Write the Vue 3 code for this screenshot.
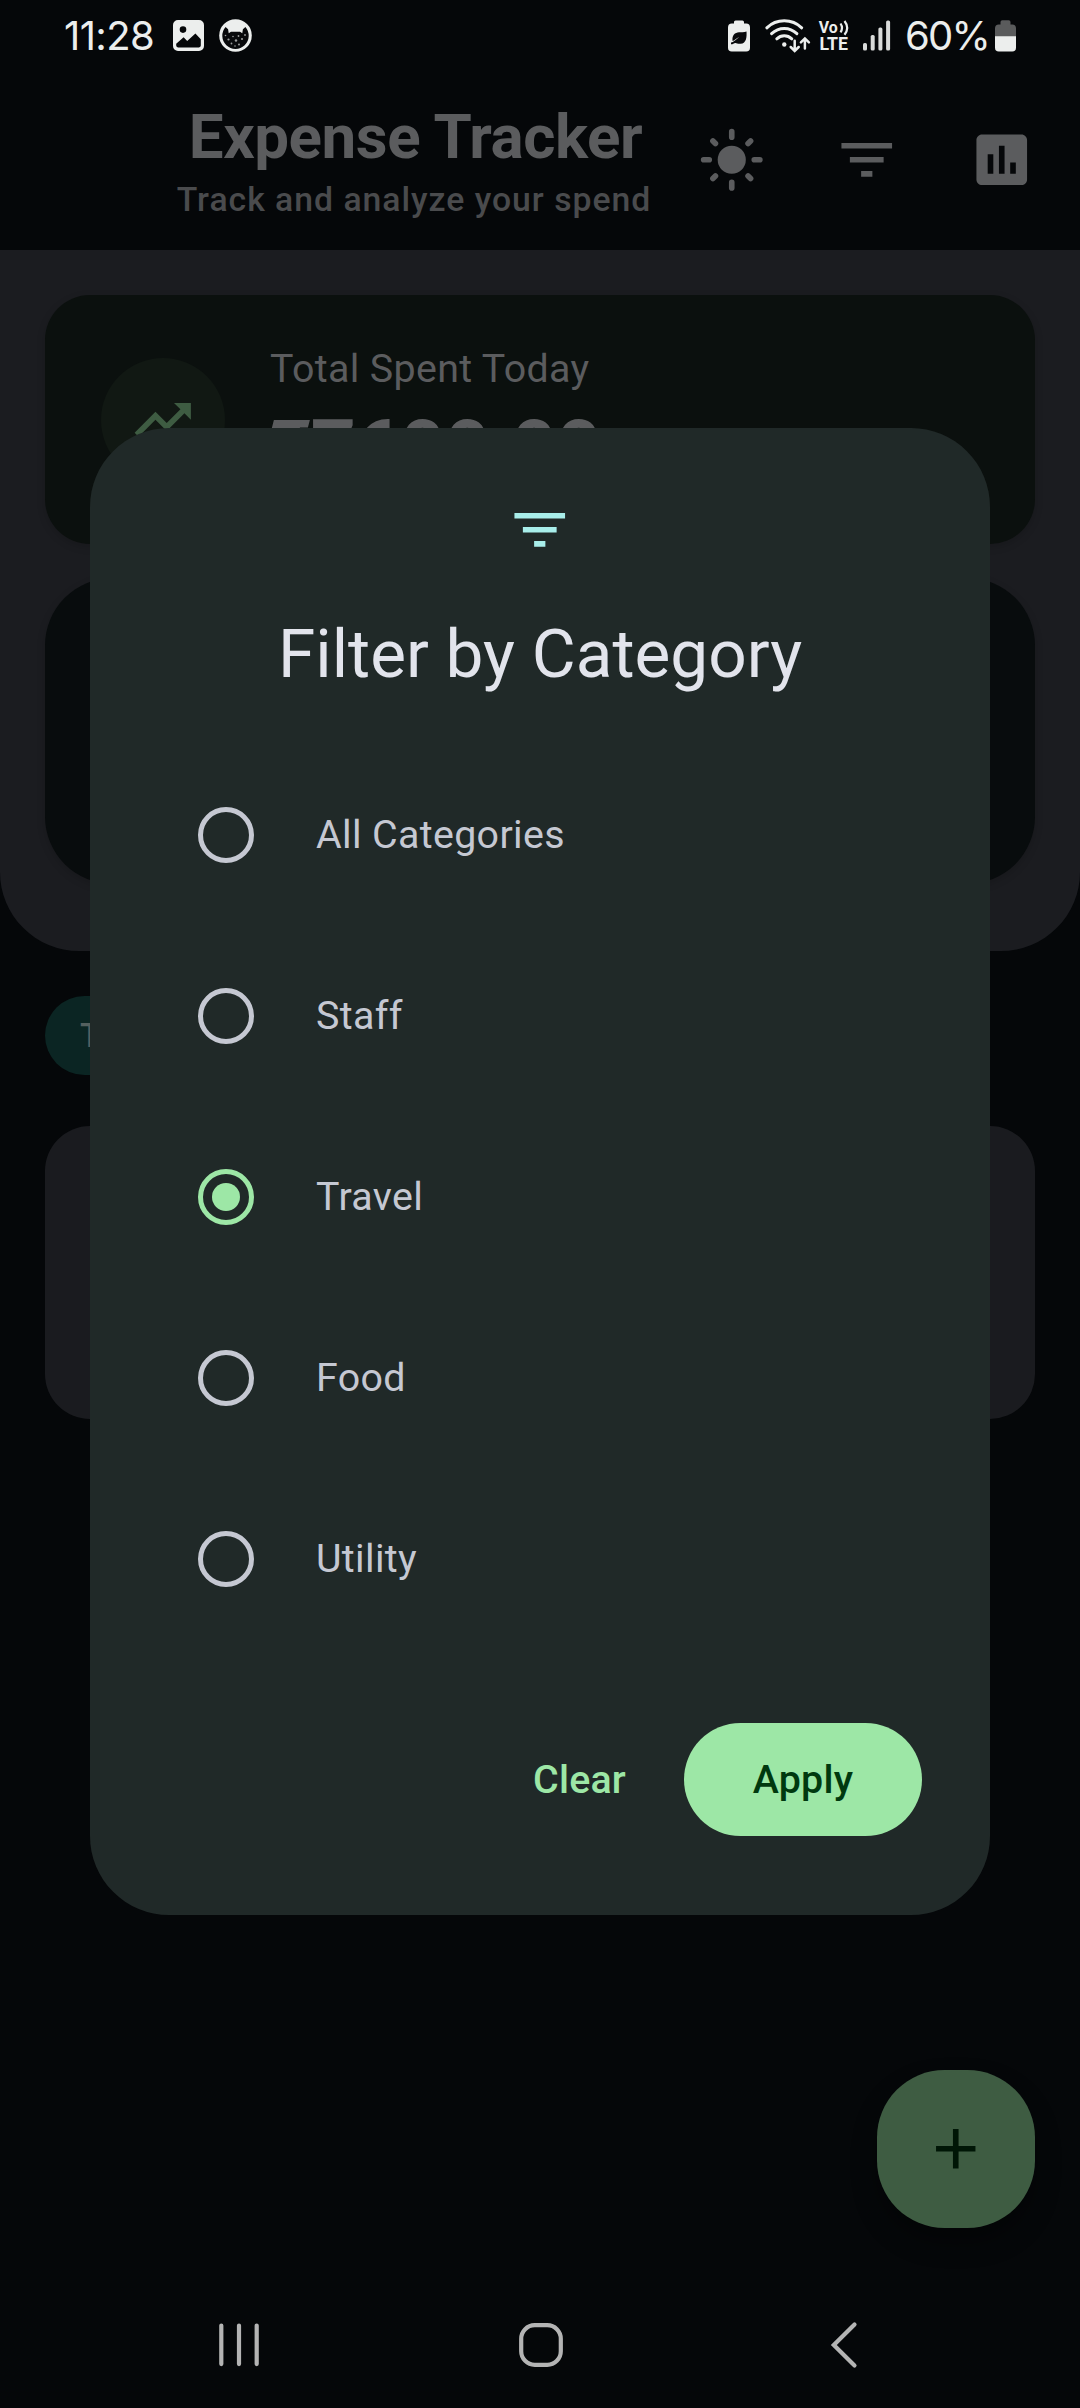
<script setup>
import { ref } from 'vue'

const categories = ['All Categories', 'Staff', 'Travel', 'Food', 'Utility']
const selected = ref('Travel')
const filterPath = 'M10 18h4v-2h-4v2zM3 6v2h18V6H3zm3 7h12v-2H6v2z'
</script>

<template>
  <div class="screen">
    <header class="status">
      <span class="clock">11:28</span>
      <svg class="s-photo" width="31" height="31" viewBox="0 0 31 31">
        <path fill="#eceeed" fill-rule="evenodd" d="M5 0h21a5 5 0 0 1 5 5v21a5 5 0 0 1-5 5H5a5 5 0 0 1-5-5V5a5 5 0 0 1 5-5zM10 6.300a3.300 3.300 0 1 0 0 6.600a3.300 3.300 0 1 0 0-6.600zM3.200 25.600q0 1.800 1.800 1.800h21q1.800 0 1.800-1.800v-6.400l-5.400-5.800-8.200 7.600-3.600-3.700-7.400 6.400z" />
      </svg>
      <svg class="s-cat" width="33" height="33" viewBox="0 0 33 33">
        <circle cx="16.500" cy="16.500" r="16.300" fill="#eceeed" />
        <path fill="#08090b" d="M6.600 8l2.500 2.200.6 4 2.300-1.500h9l2.300 1.500.6-4L26.400 8a13.200 13.200 0 1 1-19.800 0z" />
        <g fill="#9b9d9d"><circle cx="9.500" cy="20.500" r="1.100" /><circle cx="14" cy="17.500" r=".8" /><circle cx="19.500" cy="17" r=".9" /><circle cx="17" cy="21.500" r="1.200" /><circle cx="23" cy="20" r="1.100" /><circle cx="12.500" cy="24.500" r=".9" /><circle cx="20" cy="25.500" r="1" /><circle cx="16" cy="27" r=".8" /><circle cx="6.500" cy="16.500" r=".8" /><circle cx="26" cy="16" r=".9" /></g>
      </svg>
      <svg class="s-saver" width="22" height="32" viewBox="0 0 22 32">
        <path fill="#eceeed" d="M6 3.600V2a1.600 1.600 0 0 1 1.600-1.600h6.800A1.600 1.600 0 0 1 16 2v1.600h2.200A3.800 3.800 0 0 1 22 7.400v20.400a3.800 3.800 0 0 1-3.800 3.800H3.800A3.800 3.800 0 0 1 0 27.800V7.400a3.800 3.800 0 0 1 3.800-3.800z" />
        <path fill="#08090b" d="M18.500 11.500c.3 5 .2 12-6 12.300-3 .2-4-1-5.200-.8-1.500.2-2.500 1.400-4.300 1.300v-1.900c2 .2 5.500-3 8-5.400-3 1.500-5 4-6.400 3.900C3.800 15 7 12.500 11 12.200c3-.2 5.500.3 7.500-.7z" />
      </svg>
      <svg class="s-wifi" width="45" height="34" viewBox="0 0 45 34" fill="none" stroke="#eceeed" stroke-width="3" stroke-linecap="round">
        <path d="M1.800 8.800C11.500-.6 27-.6 36.700 8.800M6.600 14.700c7.300-7 18-7 25.300 0M11.800 19.800c4.300-4 10.600-4 15 0" />
        <circle cx="19.300" cy="25.500" r="2.200" fill="#eceeed" stroke="none" />
        <path d="M29.700 21.700v9.600M25.700 28l4 4 4-4M39.900 29.500v-9.800M35.900 23.400l4-4 4 4" stroke-width="2.500" />
      </svg>
      <svg class="volte" width="30" height="31" viewBox="0 0 30 31" font-family="Roboto, sans-serif" font-weight="700" fill="#eceeed">
        <text x="-.3" y="13" font-size="17" textLength="19" lengthAdjust="spacingAndGlyphs">Vo</text>
        <path d="M21.500 3.500q3 4.400 0 8.800M25.500 1q5.400 6.900 0 13.800" stroke="#eceeed" stroke-width="2.200" fill="none" />
        <text x=".5" y="30" font-size="18.500" textLength="28.500" lengthAdjust="spacingAndGlyphs">LTE</text>
      </svg>
      <svg class="s-signal" width="28" height="31" viewBox="0 0 28 31" fill="#d9dbda">
        <rect x="0" y="23" width="4" height="7.500" rx="1.600" />
        <rect x="7.700" y="15" width="4" height="15.500" rx="1.600" />
        <rect x="15.400" y="7.500" width="4" height="23" rx="1.600" />
        <rect x="23.100" y=".5" width="4" height="30" rx="1.600" />
      </svg>
      <span class="percent">60%</span>
      <svg class="s-batt" width="21" height="32" viewBox="0 0 21 32">
        <path fill="#5a5b5c" d="M5.500 4.500V2A1.800 1.800 0 0 1 7.300.2h6.400A1.800 1.800 0 0 1 15.500 2v2.500h1.700A3.800 3.800 0 0 1 21 8.300V17H0V8.300a3.800 3.800 0 0 1 3.800-3.800z" />
        <path fill="#eceeed" d="M0 16.300h21v11.500a3.800 3.800 0 0 1-3.800 3.800H3.800A3.800 3.800 0 0 1 0 27.800z" />
      </svg>
    </header>

    <div class="appbar">
      <div class="titles">
        <h1>Expense Tracker</h1>
        <p>Track and analyze your spend</p>
      </div>
      <div class="actions">
        <svg class="icon" viewBox="0 0 24 24">
          <circle cx="12" cy="12" r="5" />
          <path fill="none" stroke="#5b5c5e" stroke-width="2" stroke-linecap="round" d="M12 2v2M12 20v2M2 12h2M20 12h2M5.300 5.300l.9.900M17.800 17.800l.9.900M5.300 18.700l.9-.9M17.800 6.200l.9-.9" />
        </svg>
        <svg class="icon" viewBox="0 0 24 24"><path :d="filterPath" /></svg>
        <svg class="icon" viewBox="0 0 24 24"><path d="M19 3H5c-1.100 0-2 .9-2 2v14c0 1.100.9 2 2 2h14c1.100 0 2-.9 2-2V5c0-1.100-.9-2-2-2zM9 17H7v-7h2v7zm4 0h-2V7h2v10zm4 0h-2v-4h2v4z" /></svg>
      </div>
    </div>

    <section class="summary">
      <div class="card total">
        <div class="badge">
          <svg viewBox="0 0 24 24"><path d="M16 6l2.290 2.290-4.880 4.880-4-4L2 16.590 3.410 18l6-6 4 4 6.300-6.290L22 12V6z" /></svg>
        </div>
        <div class="amounts">
          <span class="label">Total Spent Today</span>
          <span class="amount">₹7600.00</span>
        </div>
      </div>
      <div class="card chart"></div>
    </section>

    <div class="chip">Travel</div>
    <div class="entry"></div>

    <nav class="navbar">
      <svg width="40" height="50" viewBox="0 0 40 50" stroke="#b4b4b4" stroke-width="4.200" stroke-linecap="round"><path d="M2.300 5.500v38.600M20 5.500v38.600M37.700 5.500v38.600" /></svg>
      <svg class="home" width="44" height="50" viewBox="0 0 44 50" fill="none" stroke="#b4b4b4" stroke-width="4.200"><rect x="2.200" y="5.200" width="39.600" height="39.600" rx="13.500" /></svg>
      <svg class="back" width="28" height="50" viewBox="0 0 28 50" fill="none" stroke="#b4b4b4" stroke-width="4.200" stroke-linecap="round" stroke-linejoin="miter"><path d="M24.500 4.500L3.800 25l20.700 20.500" /></svg>
    </nav>

    <button class="fab" aria-label="Add">
      <svg viewBox="0 0 24 24"><path d="M19 13h-6v6h-2v-6H5v-2h6V5h2v6h6v2z" /></svg>
    </button>

    <div class="dialog" role="dialog">
      <svg class="d-icon" viewBox="0 0 24 24"><path :d="filterPath" /></svg>
      <h2>Filter by Category</h2>
      <ul>
        <li v-for="c in categories" :key="c" @click="selected = c">
          <span class="radio" :class="{ on: c === selected }"></span>
          <span class="name">{{ c }}</span>
        </li>
      </ul>
      <div class="buttons">
        <button class="clear">Clear</button>
        <button class="apply">Apply</button>
      </div>
    </div>
  </div>
</template>

<style>
body {
  background: #050709;
}
</style>

<style scoped>
.screen {
  position: relative;
  width: 1080px;
  height: 2408px;
  overflow: hidden;
  background: #050709;
  font-family: Roboto, sans-serif;
  display: flex;
  flex-direction: column;
}
svg {
  display: block;
  flex: none;
  overflow: visible;
}
h1, h2, p, ul {
  margin: 0;
  padding: 0;
}
button {
  border: 0;
  font-family: inherit;
  padding: 0;
}

.status {
  height: 71px;
  flex: none;
  display: flex;
  align-items: center;
  color: #eceeed;
  font-family: Inter, sans-serif;
  font-size: 40px;
}
.clock {
  width: 109px;
  margin-left: 64px;
  letter-spacing: -0.600px;
}
.s-cat { margin-left: 15px; }
.s-saver { margin-left: 476px; }
.s-wifi { margin-left: 15px; }
.volte { margin-left: 9px; }
.s-signal { margin-left: 14px; }
.percent {
  margin-left: 14px;
  width: 86px;
  letter-spacing: -1.800px;
  white-space: nowrap;
}
.s-batt { margin-left: 4px; }

.appbar {
  height: 179px;
  flex: none;
  display: flex;
}
.titles {
  width: 653px;
  padding: 26px 0 0 175px;
  box-sizing: border-box;
  display: flex;
  flex-direction: column;
  align-items: center;
  white-space: nowrap;
}
h1 {
  font-size: 61.900px;
  font-weight: 700;
  line-height: 80px;
  letter-spacing: -0.450px;
  margin-left: 3px;
  color: #5b5c5e;
}
.titles p {
  font-size: 33.750px;
  font-weight: 500;
  line-height: 46px;
  letter-spacing: 0.980px;
  color: #4a4b4d;
}
.actions {
  display: flex;
  gap: 67.500px;
  padding: 55px 0 0 45px;
}
.icon {
  width: 67.500px;
  height: 67.500px;
  fill: #5b5c5e;
}

.summary {
  height: 701px;
  flex: none;
  box-sizing: border-box;
  padding: 45px 45px 67px;
  background: #1b1c20;
  border-radius: 0 0 79px 79px;
  display: flex;
  flex-direction: column;
  gap: 34px;
}
.card {
  box-shadow: 0 3px 8px rgba(0, 0, 0, 0.16);
}
.total {
  height: 249px;
  box-sizing: border-box;
  border-radius: 45px;
  background: #0b100e;
  display: flex;
  align-items: center;
  padding-left: 56px;
  gap: 45px;
}
.badge {
  width: 124px;
  height: 124px;
  border-radius: 50%;
  background: #111813;
  display: flex;
  align-items: center;
  justify-content: center;
}
.badge svg {
  width: 67.500px;
  height: 67.500px;
  fill: #3e5c42;
}
.amounts {
  display: flex;
  flex-direction: column;
  color: #5b5c5e;
}
.label {
  font-size: 39.375px;
  line-height: 56px;
  letter-spacing: 0.350px;
}
.amount {
  font-size: 78.750px;
  font-weight: 700;
  line-height: 105px;
  margin-bottom: -4px;
  letter-spacing: -0.560px;
}
.chart {
  flex: 1;
  border-radius: 67.500px;
  background: #080c0d;
}

.chip {
  flex: none;
  align-self: flex-start;
  margin: 45px 0 0 45px;
  height: 79px;
  line-height: 79px;
  padding: 0 35px;
  border-radius: 40px;
  background: #0b2523;
  color: #54605f;
  font-size: 34px;
  font-weight: 500;
}
.entry {
  flex: none;
  height: 293px;
  margin: 51px 45px 0;
  border-radius: 45px;
  background: #1a1b1f;
}

.navbar {
  margin-top: auto;
  flex: none;
  height: 126px;
  display: flex;
  align-items: center;
  padding-left: 219px;
}
.home { margin-left: 260px; }
.back { margin-left: 267px; }

.fab {
  position: absolute;
  right: 45px;
  top: 2070px;
  width: 158px;
  height: 158px;
  border-radius: 67.500px;
  background: #3e5c42;
  display: flex;
  align-items: center;
  justify-content: center;
  box-shadow: 0 14px 24px rgba(0, 0, 0, 0.35);
}
.fab svg {
  width: 67.500px;
  height: 67.500px;
  fill: #001606;
}

.dialog {
  position: absolute;
  left: 90px;
  top: 428px;
  width: 900px;
  height: 1487px;
  box-sizing: border-box;
  border-radius: 79px;
  background: #202928;
  padding: 68px 68px 79px;
  display: flex;
  flex-direction: column;
}
.d-icon {
  width: 67.500px;
  height: 67.500px;
  align-self: center;
  fill: #a8eeea;
}
h2 {
  margin-top: 45px;
  font-size: 67.500px;
  font-weight: 400;
  line-height: 90px;
  text-align: center;
  color: #e2e4ec;
}
ul {
  list-style: none;
  margin-top: 46px;
}
li {
  height: 181px;
  display: flex;
  align-items: center;
  padding-left: 40px;
  gap: 62px;
}
.radio {
  width: 56px;
  height: 56px;
  box-sizing: border-box;
  border: 5.600px solid #c5c8d2;
  border-radius: 50%;
  display: flex;
  align-items: center;
  justify-content: center;
}
.radio.on {
  border-color: #9de7a6;
}
.radio.on::after {
  content: '';
  width: 28px;
  height: 28px;
  border-radius: 50%;
  background: #9de7a6;
}
.name {
  font-size: 39.375px;
  letter-spacing: 0.350px;
  padding-bottom: 2px;
  color: #c5c8d2;
}
.buttons {
  margin-top: auto;
  display: flex;
  justify-content: flex-end;
  align-items: center;
  gap: 58px;
}
.clear,
.apply {
  font-size: 39.375px;
  font-weight: 500;
  letter-spacing: 0.200px;
}
.clear {
  background: none;
  color: #9de7a6;
}
.apply {
  width: 238px;
  height: 113px;
  border-radius: 57px;
  background: #9de7a6;
  color: #00390f;
}
</style>
